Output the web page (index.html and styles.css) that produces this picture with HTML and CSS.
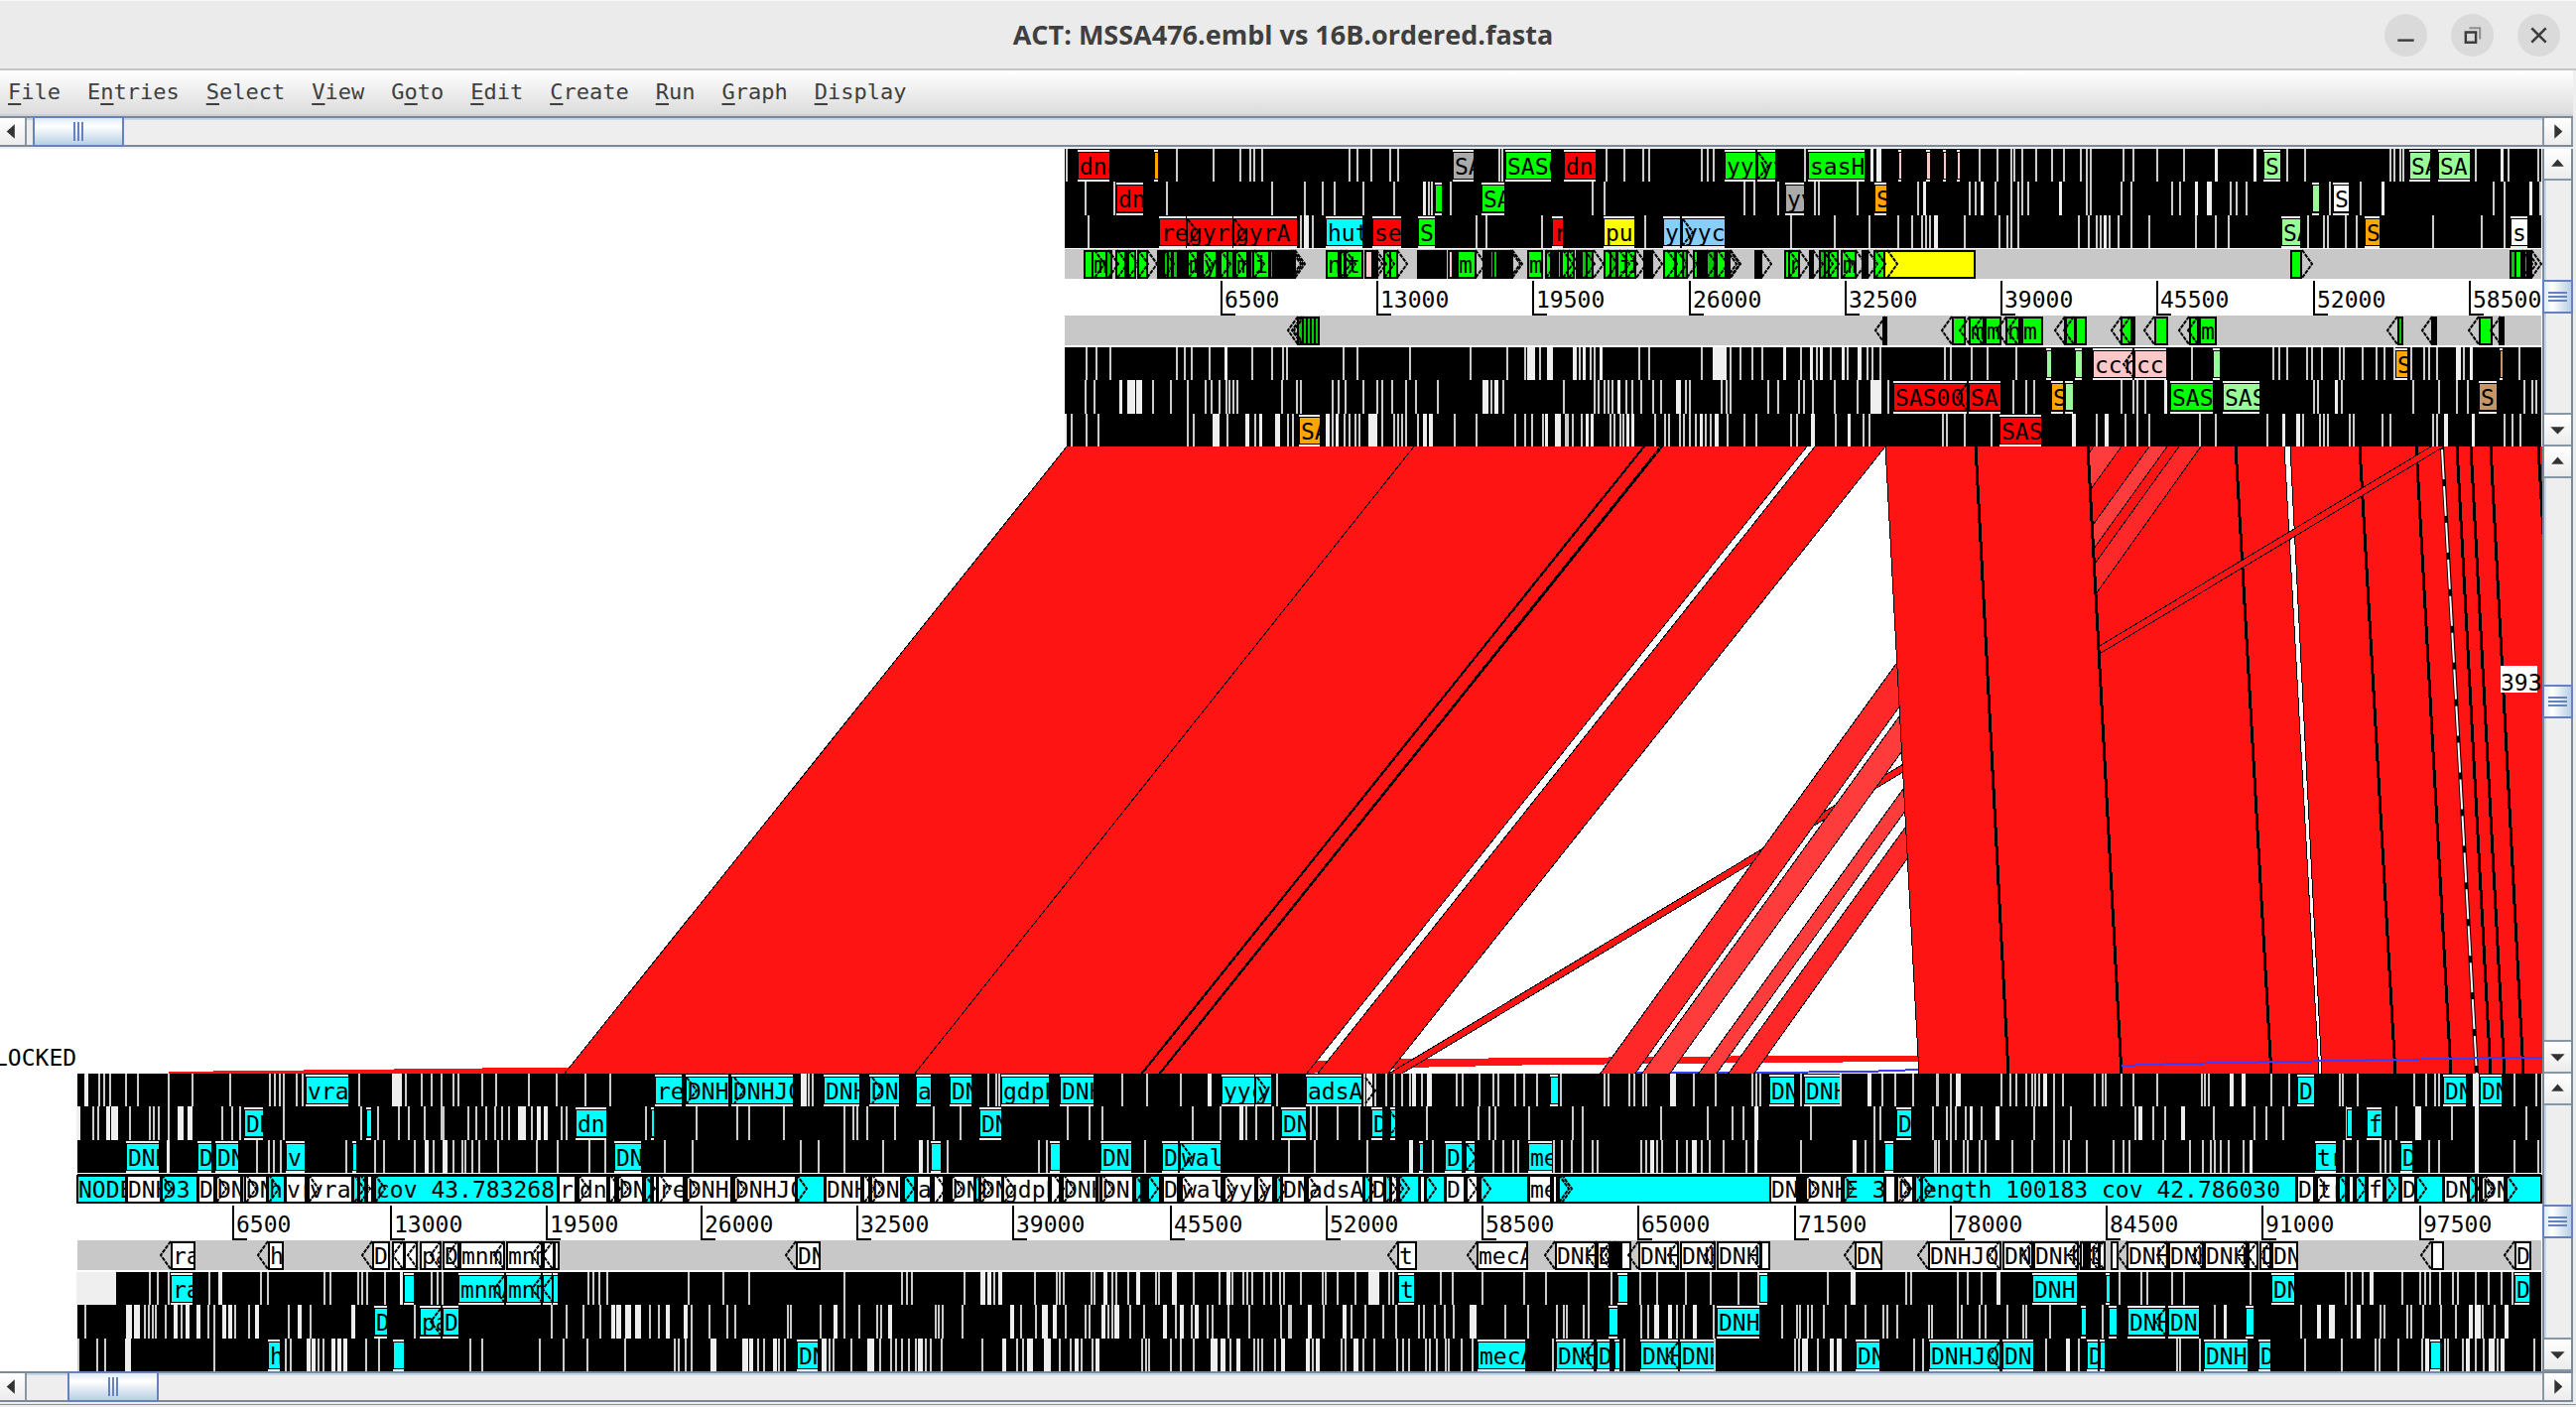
FILE: index.html
```html
<!DOCTYPE html>
<html lang="en">
<head>
<meta charset="utf-8">
<title>ACT: MSSA476.embl vs 16B.ordered.fasta</title>
<link rel="stylesheet" href="styles.css">
</head>
<body>
<div class="window">
  <header class="titlebar">
    <h1 class="title">ACT: MSSA476.embl vs 16B.ordered.fasta</h1>
    <div class="window-buttons">
      <button class="wbtn" aria-label="Minimize"><svg viewBox="0 0 42 42"><path d="M13 26h16" stroke="#3d3d3d" stroke-width="2.4"/></svg></button>
      <button class="wbtn" aria-label="Restore"><svg viewBox="0 0 42 42" fill="none"><path d="M14.500 18h10v10h-10z" stroke="#3d3d3d" stroke-width="2.400"/><path d="M18 14h10.500v11" stroke="#8f8f8f" stroke-width="2"/></svg></button>
      <button class="wbtn" aria-label="Close"><svg viewBox="0 0 42 42"><path d="M14 14l14 14M28 14l-14 14" stroke="#3d3d3d" stroke-width="2.600"/></svg></button>
    </div>
  </header>
  <nav class="menubar">
    <button><u>F</u>ile</button><button>E<u>n</u>tries</button><button><u>S</u>elect</button><button><u>V</u>iew</button><button>G<u>o</u>to</button><button><u>E</u>dit</button><button><u>C</u>reate</button><button><u>R</u>un</button><button><u>G</u>raph</button><button><u>D</u>isplay</button>
  </nav>

  <div class="hscroll hscroll-top">
    <button class="step" aria-label="Scroll left"><svg viewBox="0 0 26 30"><path d="M15 7v16l-9-8z"/></svg></button>
    <div class="track"><span class="thumb"><i></i><i></i><i></i></span></div>
    <button class="step step-end" aria-label="Scroll right"><svg viewBox="0 0 26 30"><path d="M10 7v16l9-8z"/></svg></button>
  </div>

  <main>
    <section class="pane">
      <svg class="canvas" id="subject" viewBox="0 0 2562 300" role="img" aria-label="MSSA476.embl"></svg>
      <div class="vscroll">
        <button class="step" aria-label="Scroll up"><svg viewBox="0 0 30 30"><path d="M8 18h14l-7-8z"/></svg></button>
        <div class="track"><span class="thumb"><i></i><i></i><i></i></span></div>
        <button class="step step-end" aria-label="Scroll down"><svg viewBox="0 0 30 30"><path d="M7 12h16l-8 8z"/></svg></button>
      </div>
    </section>
    <section class="pane pane-compare">
      <svg class="canvas" id="compare" viewBox="0 0 2562 632" role="img" aria-label="Comparison"></svg>
      <div class="vscroll">
        <button class="step" aria-label="Scroll up"><svg viewBox="0 0 30 30"><path d="M8 18h14l-7-8z"/></svg></button>
        <div class="track"><span class="thumb"><i></i><i></i><i></i></span></div>
        <button class="step step-end" aria-label="Scroll down"><svg viewBox="0 0 30 30"><path d="M7 12h16l-8 8z"/></svg></button>
      </div>
    </section>
    <section class="pane">
      <svg class="canvas" id="query" viewBox="0 0 2562 300" role="img" aria-label="16B.ordered.fasta"></svg>
      <div class="vscroll">
        <button class="step" aria-label="Scroll up"><svg viewBox="0 0 30 30"><path d="M8 18h14l-7-8z"/></svg></button>
        <div class="track"><span class="thumb"><i></i><i></i><i></i></span></div>
        <button class="step step-end" aria-label="Scroll down"><svg viewBox="0 0 30 30"><path d="M7 12h16l-8 8z"/></svg></button>
      </div>
    </section>
  </main>

  <div class="hscroll hscroll-bottom">
    <button class="step" aria-label="Scroll left"><svg viewBox="0 0 26 30"><path d="M15 7v16l-9-8z"/></svg></button>
    <div class="track"><span class="thumb"><i></i><i></i><i></i></span></div>
    <button class="step step-end" aria-label="Scroll right"><svg viewBox="0 0 26 30"><path d="M10 7v16l9-8z"/></svg></button>
  </div>
</div>
<script src="script.js"></script>
</body>
</html>
```
FILE: styles.css
```css
* { box-sizing: border-box; }

body {
  margin: 0;
  background: #eee;
  font-family: "DejaVu Sans Mono", monospace;
  color: #3f3f3f;
}

button {
  margin: 0;
  padding: 0;
  border: 0;
  background: none;
  font: inherit;
  color: inherit;
}

.window {
  padding-right: 3px;
  border-top: 1px solid #fafafa;
  border-bottom: 1px solid #8c8c94;
  padding-bottom: 2px;
}

/* Title bar */
.titlebar {
  display: grid;
  grid-template-columns: 1fr auto 1fr;
  align-items: center;
  height: 70px;
  margin-right: -3px;
  padding-right: 16px;
  padding-left: 6px;
  background: #ebebeb;
  border-bottom: 2px solid #c4c4c4;
}

.title {
  grid-column: 2;
  margin: 0;
  font: 700 27px/36px "Open Sans", "Noto Sans", sans-serif;
}

.window-buttons {
  display: flex;
  justify-content: flex-end;
  gap: 24px;
}

.wbtn {
  width: 43px;
  height: 43px;
  border-radius: 50%;
  background: #dadada;
}

.wbtn svg { display: block; width: 43px; height: 43px; fill: none; }

/* Menu bar */
.menubar {
  display: flex;
  gap: 27px;
  height: 46px;
  padding: 0 8px;
  background: linear-gradient(#fff, #dcdcdc);
  border-bottom: 2px solid #cfcfcf;
  font-size: 22px;
  line-height: 42px;
}

.menubar u {
  text-decoration-thickness: 2px;
  text-underline-offset: 4px;
}

/* Scroll bars */
.hscroll {
  display: flex;
  height: 31px;
  border-top: 2px solid #7a8a99;
  border-bottom: 2px solid #7a8a99;
  background: #eee;
}

.hscroll-top { margin-bottom: 2px; }

.step { display: block; flex: none; fill: #333; background: linear-gradient(#fff, #ececec); }
.step svg { display: block; }

.hscroll .step {
  width: 27px;
  border-right: 2px solid #8797a6;
}

.hscroll .step-end {
  width: 31px;
  border-left: 2px solid #8797a6;
}

.hscroll .step svg { width: 26px; height: 27px; }

.track {
  flex: 1;
  display: flex;
  min-width: 0;
  min-height: 0;
}

.hscroll .track { border-top: 2px solid #c4d7e8; }

.thumb {
  display: flex;
  align-items: center;
  justify-content: center;
  gap: 2px;
  border: 2px solid #6382bf;
  background: linear-gradient(#dfeaf5, #fff 30%, #b8cfe5);
}

.thumb i { background: #6382bf; }

.hscroll .thumb {
  width: 92px;
  margin: -4px 0 -2px 6px;
}

.hscroll-bottom .thumb { margin-left: 41px; }

.hscroll .thumb i { width: 2px; height: 19px; }

.vscroll {
  display: flex;
  flex-direction: column;
  flex: none;
  width: 31px;
  border-left: 2px solid #7a8a99;
  border-right: 2px solid #7a8a99;
  background: #eee;
}

.vscroll .step {
  height: 32px;
  border-bottom: 2px solid #8797a6;
}

.vscroll .step-end {
  height: 34px;
  border-top: 2px solid #8797a6;
}

.vscroll .step svg { width: 27px; height: 30px; }

.vscroll .track {
  flex-direction: column;
  justify-content: center;
  border-left: 2px solid #c4d7e8;
}

.vscroll .thumb {
  flex-direction: column;
  height: 34px;
  margin: 0 -2px 0 -4px;
  background: linear-gradient(90deg, #dfeaf5, #fff 30%, #b8cfe5);
}

.vscroll .thumb i { width: 19px; height: 2px; }

.pane-compare .track { justify-content: flex-start; padding-top: 208px; }

/* Sequence and comparison canvases */
.pane { display: flex; }

.canvas {
  display: block;
  flex: 1;
  min-width: 0;
  height: auto;
  background: #fff;
  font-size: 23px;
}

.canvas text { fill: #000; white-space: pre; }
.canvas rect, .bands { shape-rendering: crispEdges; }
.arrow { fill: none; stroke: #000; stroke-width: 2; stroke-dasharray: 4 1; }
.sliver { shape-rendering: auto; }
```
FILE: script.js
```js
// Stop codons are "centre" or "centre:width"; features are "start-end colour label".
// Every tile has its own origin and units per pixel.
const COLOURS = {
  r: '#ff0000', g: '#00ff00', o: '#ffa500', a: '#aaaaaa', c: '#00ffff',
  y: '#ffff00', s: '#87cefa', p: '#ffc8c8', l: '#98fb98', w: '#ffffff',
  t: '#c89664', k: '#000000', d: '#00c800', q: '#c8c8c8'
};
const ROWS = [[0, 33], [33, 34], [67, 33], [200, 33], [233, 34], [267, 33]];
const TOP = 3, LOW = 1568 / 660, LAST = 1568 / 646;
const ADVANCE = 23 * 0.602;

const subject = {
  left: 1073,
  right: 2561,
  strip: '#c8c8c8',
  ticks: [1231, 1388, 1545, 1703, 1860, 2017, 2174, 2332, 2489],
  tiles: [
    {
      x: 1060, s: TOP,
      stops: [
        '46 377 489 571 600 612 636 901 924 965 1024 1047 1352 1362',
        '101 190 347 665 766 818 854 942 1036 1126:9 1140 1150 1206',
        '112 754 770:16 789 1283 1313 1483',
        '106 136 178 377 401 424 477 527:9 606 665 700 712 883 924 1083 1265 1377 1430 1450:24 1477 1506:18',
        '101 130 209:10 240:24 265:18 306 360 412 466 484 506 527 536 548 560 695 742 754 848 866 889 942 983 1000 1030 1071 1101 1166 1312:18 1330 1344:12 1365 1548',
        '41:6 60 106 142 412 430 497:22 530 592:12 614 633:10 683:16 713 728 833:12 848 863:10 886 901 918 930 970:28 1000 1036 1048 1060 1072 1107 1127:12 1145:12 1218 1283 1400 1430 1453 1486 1497:10 1530:16 1554'
      ],
      genes: [
        '80-175 r dna;311-321 o;1214-1275 a SA;1373-1510 g SASO',
        '197-275 r dna;1161-1180 g;1301-1368 g SA',
        '327-404 r rec;411-545 r gyrB;553-740 r gyrA;830-940 c hut;972-1057 r ser;1110-1157 g SA;1516-1546 r r',
        '', '', '750-810 o SA'
      ],
      frameArrows: '2:411 2:553',
      fwd: '100-122 g;122-165 g m;165-180 d;195-222 g;222-232 k;232-252 g;262-287 g;320-338 k;338-350 d;350-362 d;366-380 d;386-402 k;402-412 k;412-440 g m;440-455 k;455-497 g y;497-510 k;510-530 g;532-548 d;548-555 k;555-592 g m;592-600 k;600-608 d;610-657 g i;660-670 d;670-735 k;830-868 g n;872-886 g;888-940 g t;948-970 p;970-985 k;1005-1022 g;1024-1044 g;1108-1192 k;1200-1212 p;1218-1226 k;1226-1282 g m;1304-1326 k;1326-1336 d;1336-1346 d;1346-1392 k;1440-1482 g m;1493-1510 g;1512-1530 k;1530-1545 d;1546-1570 k',
      fwdArrows: '130 170 197 232 262 287 340 385 415 455 510 555 612 735 728 722 872 888 970 980 1005 1044 1282 1392 1386 1495 1530',
      rev: '745-760 d;760-772 d;772-784 d;784-796 d;796-808 d',
      revArrows: '745 755 762'
    },
    {
      x: 1570, s: TOP,
      stops: [
        '147 200 259 276 435 452 470 747 950:8 970:16 1276 1329 1370 1381 1405 1447 1493 1529',
        '106 141 564 594 665 776 789 906 1088 1108:9 1246 1264 1284:10 1324 1370 1391 1405 1423 1520:10',
        '264 706 836 941 1029 1070 1100 1112 1124 1144:12 1229 1334 1358 1370 1393',
        '50:12 65 79:10 100 112 132:10 247 276 435 481:26 504:16 523 553 588 618 685:10 735 768:10 783 797:9 824 862:10 877 912:12 935 952 976 1170 1188 1252 1300 1387',
        '17 112 124 142 154 165 185:10 206 224 253 288 312 364:14 388 400 494 511 523 635 665 730 745 771 836 906 962:34 1000 1376 1417 1440',
        '4:8 29 45 71 90:10 103:10 158 171 190 197 212:10 226:10 294 323 335 370 382 400 418 432:9 446 462 479:12 512 564 600 706 724 771:12 841 879:9 924 941 1165 1176 1229 1312'
      ],
      genes: [
        '20-115 r dna;507-597 g yyc;605-657 g yy;760-927 g sasH;1032-1038 p;1115-1125 p;1167-1173 p;1208-1214 p',
        '690-744 a yy;960-992 o S',
        '141-232 y pur;320-368 s yy;378-503 s yyc',
        '1479-1491 l',
        '1018-1237 r SAS0033;1246-1338 r SA;1494-1527 o S;1537-1556 l',
        '1337-1461 r SAS'
      ],
      frameArrows: '0:605 2:378',
      fwd: '0-10 g;12-30 g;30-48 g;57-72 k;72-86 d;88-106 d;140-160 g;160-178 d;180-206 g i;206-235 g i;262-285 k;320-353 g;357-378 g;378-390 d;410-424 g;424-450 k;450-474 d;480-506 g;506-518 k;598-614 k;686-700 g;700-730 g n;762-772 k;792-806 d;806-820 d;820-846 g;858-900 g m;922-936 k;958-988 g;988-1260 y',
      fwdArrows: '16 32 82 108 150 185 210 238 285 330 360 390 450 484 510 518 522 614 700 730 770 800 820 860 900 935 960 997',
      rev: '984-994 k;1195-1230 g;1245-1287 g m;1292-1337 g m;1357-1395 g n;1395-1404 k;1405-1465 g m;1534-1565 g',
      revArrows: '990 1192 1245 1285 1355 1390 1532',
      revFrameArrows: '1:1237'
    },
    {
      x: 2080, s: TOP,
      stops: [
        '52 68 80 181 211 281 363 460:9 578:10 675 728 986 998 1016 1027 1245 1325:9 1345 1434',
        '68 80 175 205 328 351 401:10 439:16 504 522 551 804 898 966:10 1299 1333 1412:10 1440',
        '46 75 98 110 124:10 139 164 205 258 399 458 499 739 787 798 851 886 1116 1263 1333',
        '387 634 651 675 734 751 780 834 845 904 946 968 998 1051 1088 1104 1128 1192:14 1210 1231:10 1376',
        '175 210 223 246 307:10 757 769 824:10 839 1057 1133 1188 1222 1392 1416 1428',
        '31:12 98 130:12 187 222 258 411 458 616 666:10 707:12 722 775 786 798 864 875 963 986 1116 1128 1154:12 1237:10 1333 1357 1381'
      ],
      genes: [
        '605-655 l SA;1047-1108 l SA;1135-1226 l SA',
        '753-772 l;816-860 w S',
        '660-714 l SA;912-955 o S;1352-1401 w s',
        '37-54 l;90-208 p ccrB;216-308 p cc;454-472 l;1005-1038 o S;1319-1325 t',
        '7-25 l;325-450 g SAS;484-590 l SASO;1258-1308 t S',
        ''
      ],
      fwd: '686-718 g;1350-1364 d;1366-1382 g;1382-1392 k;1392-1402 d;1402-1412 k',
      fwdArrows: '720 1385 1398 1412',
      rev: '5-32 g;35-65 g;175-210 g;203-212 k;275-312 g;380-405 g;412-458 g mi;1010-1022 d;1114-1124 k;1257-1293 g;1318-1328 k',
      revArrows: '30 173 200 273 378 404 1008 1114 1255 1320',
      revFrameArrows: '0:210'
    }
  ]
};

const query = {
  left: 78,
  right: 2561,
  strip: '#000000',
  ticks: [235, 394, 551, 707, 864, 1021, 1180, 1337, 1494, 1651, 1809, 1966, 2123, 2280, 2439],
  tiles: [
    {
      x: 0, s: LOW,
      stops: [
        '206:9 237 250 264 302 331 405 462 550 647 658 670 680 711 724 860 950:24 972 1010 1033 1057 1086 1098 1155 1188 1267 1332 1401 1462',
        '188:9 224 236 259:10 274:16 312 358 369 381 403 433:14 456:12 531 556 576 680 865 904 954 980 1017 1057 1062 1122 1140 1165 1186 1203 1218 1250:18 1274 1290:9 1306:9 1345 1356 1546',
        '403:8 615 644 656 673 829 899 920 992 1022:10 1038 1066:12 1086 1108 1114 1130 1148 1192 1285 1336 1411 1450',
        '230:94 358 377 403 501 528:10 624 642 777 792 858 868 880 922 962:8 1034 1048 1060 1409 1420 1434 1454',
        '205 308:14 328:14 346 357 366 372 396 420:10 434 449:10 474:9 500 514 537:10 550:9 564 597 616:10 692 718:9 744 845:10 922 992 1322 1356 1398 1438 1468:9 1481:12 1503:14 1527:14 1556',
        '187 232 251 307:14 512 685 697 738:10 751:9 763 775 799:9 812:9 826:10 876 908 1127 1155 1293 1350 1406 1496'
      ],
      genes: [
        '733-835 c vraC',
        '588-630 c DN;878-888 c;1380-1452 c dna',
        '304-379 c DNHJ;476-506 c D;518-571 c DN;686-729 c vr;845-852 c;1474-1535 c DNH',
        '412-460 c ra;970-990 c;1101-1208 c mnmA;1213-1295 c mnm;1301-1322 c;1326-1334 c',
        '897-926 c D;1008-1056 c pa;1061-1097 c D',
        '645-669 c h;943-967 c'
      ],
      fwd: '186-302 c NODE;304-386 w DNH;388-473 c 93;475-512 w D;518-577 w DN;579-586 c;588-638 w DN;641-683 c h;685-732 w vr;738-843 w vra;845-858 c;861-875 c;878-892 w;898-1335 c cov 43.783268;1338-1378 w r;1386-1455 w dn;1458-1472 w;1480-1540 w DN;1545-1568 c',
      fwdArrows: '388 518 590 645 738 848 863 898 1386 1460 1480 1545',
      rev: '410-466 w ra;643-676 w h;893-932 w D;940-968 w;970-998 w;1007-1056 w pa;1062-1098 w D;1102-1208 w mnmA;1213-1298 w mnm;1302-1325 w;1327-1337 w',
      revArrows: '408 641 892 965 1001 1055 1095 1207 1297 1323',
      revFrameArrows: '0:1207 0:1297 0:1323 1:1055'
    },
    {
      x: 650, s: LOW,
      stops: [
        '379:14 392 402 822 842 849 1142 1203 1282 1353:10 1514',
        '2 124 221 249 333 477 500 509 533 598 691 756 1012 1064 1096 1311 1377 1428:9 1440 1464 1503',
        '48 114 374 416 477 570 661:10 676 724 942 962 1198 1543',
        '104 187 249 477 616 628 640 766 810:12 824:10 836 850:10 933 985 993 1003 1068 1077 1102:9 1120 1129 1157 1182:10 1223 1231 1267:12 1314 1375 1396:9 1407 1432 1441 1454 1482 1498 1520 1529',
        '11 34 54:10 98:9 112 155 198 216 342 350 420 456:10 477 514 557 565 586:10 695 704 713 760 879:10 901 937 957:14 982:9 1008 1054 1064 1098:9 1110 1119 1130:12 1161 1195 1244:9 1271 1284:9 1310 1321:10 1347 1359 1398 1446 1523 1543',
        '71 80 98 112 164:14 239:14 254:9 270 286 310:9 320 334 429:12 443 452 495 540:16 562 588 601 616 631 648 659:12 673 685 710 808 860:10 892 904 922:14 963:16 993 1020 1033:9 1045 1071 1084:9 1190 1199 1208 1260 1282 1314 1363:16 1385:12 1402 1420:9 1458 1468 1478 1508 1527:10'
      ],
      genes: [
        '27-87 c rec;99-200 c DNHJ;210-354 c DNHJO;431-512 c DNH;540-608 c DN;650-684 c a;731-782 c DN;856-968 c gdpP;995-1075 c DNH;1382-1458 c yyc;1463-1500 c y',
        '16-22 c;804-852 c DN;1526-1583 c DN',
        '687-708 c;972-992 c;1094-1163 c DN;1239-1275 c D;1284-1378 c walK',
        '', '', '367-414 c DN'
      ],
      fwd: '0-14 c;18-28 w;32-92 w rec;99-207 w DNHJ;213-361 w DNHJO;364-429 c;432-518 w DNH;522-536 w;541-614 w DN;620-646 c;650-685 w a;692-715 w;733-788 w DN;790-800 c;804-855 w DN;858-968 w gdpP;972-992 w;1000-1082 w DNH;1084-1090 c;1094-1168 w DN;1174-1187 c;1205-1234 c;1239-1276 w D;1286-1380 w wal;1387-1460 w yyc;1466-1505 w y;1510-1522 c;1526-1580 w DN',
      fwdArrows: '0 36 99 213 364 524 543 620 695 735 790 806 860 978 1003 1096 1174 1205 1286 1387 1466 1510',
      frameArrows: '0:99 0:213 0:543 0:1466 2:1286',
      rev: '364-417 w DN',
      revArrows: '362'
    },
    {
      x: 1300, s: LOW,
      stops: [
        '177 190:14 204 231 250 269 287 297:9 315 334:12 400 413 453 487 498 540 560 592 648 754 763 813 825 845 852 916:14 967 1020 1108 1117 1127 1223 1319 1388:9 1418 1450 1493 1552',
        '50 65 115 167 329 451 478 491 572 678 702 888 1000 1060 1085 1117:9 1247 1400 1413 1540',
        '59 186 290:9 343 488 511 535 547 632 650 675 700 724 736 841 852 866:9 879 891 926 951 967:12 985 1005 1038 1092 1117:8 1223 1352:10 1377 1400 1544 1554',
        '26 79 85 115 157 201:26 238 246 362 390 461 561 613 716 770 838 879 948 1008 1074 1122 1288 1349:12 1475 1487',
        '2 47:9 80 130:9 148 180 223 254 310 321 347 371 391 438:16 515 571 640 656 664 704 714 841 858 878:12 909:10 926 943 970:9 1014 1178 1215 1222 1241 1249 1278 1330 1377 1421 1430 1455 1530 1537',
        '43:10 54 66:9 123 132 157:12 175 203 256 272 284 326 336 351 374 381 412 436 629 800 1017 1210 1218 1234:14 1265 1298:10 1316:12 1494 1516'
      ],
      genes: [
        '41-170 c adsA;624-641 c;1151-1208 c DN;1234-1315 c DNH',
        '196-220 c D;243-253 c;1454-1487 c D',
        '312-319 c;373-411 c D;422-443 c;573-627 c me;1426-1445 c',
        '261-296 c t;787-807 c;1127-1142 c',
        '765-784 c;1025-1124 c DNH',
        '452-564 c mecA;638-728 c DNH;736-766 c D;780-789 c;840-928 c DNH;935-1014 c DNH;1356-1412 c DN;1533-1699 c DNHJO'
      ],
      fwd: '35-41 c;42-175 w adsA;178-192 c;195-225 w D;228-240 c;243-256 w;262-310 c;312-322 w;326-370 c;373-418 w D;422-450 w;455-570 c;573-625 w me;630-640 w;645-1149 c;1151-1213 w DN;1236-1322 w DNH;1325-1424 c E 3;1426-1450 w;1454-1492 w D;1496-1512 c;1515-1522 w',
      fwdArrows: '42 180 230 246 262 326 422 455 645 652 1236 1326 1456 1464 1500',
      frameArrows: '2:422 1:238 0:180',
      rev: '260-302 w t;450-567 w mecA;637-732 w DNH;737-765 w D;770-778 k;780-790 k;793-815 w;837-930 w DNH;936-1018 w DNH;1023-1125 w DNH;1128-1148 w;1353-1415 w DN;1530-1702 w DNHJO',
      revArrows: '258 448 635 733 768 780 835 930 1018 1125 1351 1528',
      revFrameArrows: '2:728 2:928'
    },
    {
      x: 1950, s: LAST,
      stops: [
        '5 38 57:12 162 185 200 224 238 246 254 268:9 291 314 391 409 418 457 486 543 653 661 671 726:9 754:10 823 866 990 998 1033 1172 1202 1224 1232 1323:14 1418 1470',
        '30 40 52 76 88:8 114 154:10 243 291 333 490 502:9 533 563 606:10 681 781 810 852 1008 1128 1181:14 1265 1325:9 1446',
        '2 10 38 71 79 110 124 190 239 291 315 328 371 438 461 475 558 624 656 675 684 700 719 756 774:8 999 1033 1090 1101 1113 1208 1232 1325:9 1418 1476',
        '57 81 115 154:9 452 504 520 581 610 771 1004 1020 1047 1068:9 1143 1186 1198 1212 1236 1268 1280 1323 1355 1385 1413',
        '57 66 110 124 178 216 224 281 410 685 711:8 895 939:10 970:14 1020 1036:9 1089 1099 1156 1165 1194 1238 1275 1312:10 1327:14 1341 1368 1398:9',
        '271 326:9 352 592 600 648 905 995 1077 1087 1133 1192 1205:10 1247 1256 1292 1303:9 1324 1343 1361:14 1377 1389:9 1466'
      ],
      genes: [
        '888-926 c D;1245-1298 c DN;1334-1387 c DN',
        '1010-1020 c;1059-1093 c f',
        '932-980 c tr;1140-1168 c D',
        '241-346 c DNH;421-427 c;826-879 c DN;1420-1454 c D',
        '360-369 c;426-445 c;474-564 c DNH;573-645 c DNH;763-778 c',
        '168-241 c DN;374-398 c D;406-416 c;659-765 c DNH;793-821 c D;1214-1235 c'
      ],
      fwd: '-31-884 c ength 100183 cov 42.786030;887-927 w D;935-983 w tr;988-1006 c;1011-1025 w;1030-1054 c;1058-1097 w f;1102-1136 c;1140-1174 w D;1178-1242 c;1245-1303 w DN;1306-1322 c;1325-1332 w;1337-1393 w DN;1397-1483 c',
      fwdArrows: '-31 935 988 1030 1102 1178 1306 1338 1345 1397',
      rev: '168-238 w DN;243-350 w DNH;358-364 w;368-374 w;378-400 w D;403-415 w;432-447 w;449-469 q;472-568 w DNH;573-655 w DNH;659-763 w DNH;768-788 w;795-820 w D;825-885 w DN;1215-1242 w;1420-1456 w D',
      revArrows: '158 238 350 362 398 412 470 568 655 763 790 820 1213 1418',
      revFrameArrows: '2:158 1:564'
    }
  ]
};

const rect = (x, y, w, h, fill, extra = '') =>
  `<rect x="${Math.round(x)}" y="${y}" width="${Math.max(1, Math.round(w))}" height="${h}" fill="${fill}"${extra}/>`;

const list = (text) => (text ? text.split(';') : []);
const words = (text) => (text ? text.split(' ') : []);

function parseFeature(item, tile) {
  const [, a, b, colour, label] = item.match(/^(-?\d+)-(\d+) (\w) ?(.*)$/);
  const x = Math.round(tile.x + a / tile.s);
  return { x, w: Math.round(tile.x + b / tile.s) - x, colour: COLOURS[colour], label };
}

// A label is clipped to its feature; letters that fall wholly outside are dropped.
function labelled(f, y, h, baseline) {
  const label = f.label.slice(0, Math.ceil((f.w - 3) / ADVANCE));
  if (!label) return '';
  return `<svg x="${f.x}" y="${y}" width="${f.w}" height="${h}"><text x="1" y="${baseline}">${label}</text></svg>`;
}

function arrow(x, y, dir, h) {
  const tip = x + 10 * dir;
  return `<path class="arrow" d="M${x} ${y}L${tip} ${y + h / 2}L${x} ${y + h}"/>`;
}

function drawGenome(id, g) {
  const width = g.right - g.left;
  let out = rect(g.left, 0, width, 100, '#000') + rect(g.left, 200, width, 100, '#000');
  out += rect(g.left, 101, width, 30, g.strip) + rect(g.left, 168, width, 30, '#c8c8c8');

  for (const tile of g.tiles) {
    tile.stops.forEach((row, i) => {
      const [y, h] = ROWS[i];
      for (const stop of row.split(' ')) {
        const [centre, w] = stop.split(':').map(Number);
        const px = w ? w / tile.s : 2;
        out += rect(tile.x + centre / tile.s - px / 2, y, px, h, w ? '#efefef' : '#cccccc');
      }
    });
  }

  for (const tile of g.tiles) {
    tile.genes.forEach((row, i) => {
      const [y, h] = ROWS[i];
      for (const item of list(row)) {
        const f = parseFeature(item, tile);
        out += rect(f.x - 1, y, f.w + 1, h, '#000');
        out += rect(f.x - 1, y + 1, f.w + 1, 2, '#eee') + rect(f.x - 1, y + h - 2, f.w + 1, 2, '#eee');
        out += rect(f.x, y + 4, f.w, 26, f.colour) + labelled(f, y + 4, 26, 22);
      }
    });
    for (const [items, y] of [[tile.fwd, 102], [tile.rev, 169]]) {
      for (const item of list(items)) {
        const f = parseFeature(item, tile);
        const line = f.colour === COLOURS.q ? '' : ' stroke="#000" stroke-width="2"';
        out += rect(f.x, y + 1, f.w, 27, f.colour, line) + labelled(f, y, 29, 23);
      }
    }
    const at = (v) => Math.round(tile.x + v / tile.s);
    for (const v of words(tile.fwdArrows)) out += arrow(at(v), 102, 1, 28);
    for (const v of words(tile.revArrows)) out += arrow(at(v), 169, -1, 28);
    for (const [key, dir, base] of [['frameArrows', 1, 0], ['revFrameArrows', -1, 3]]) {
      for (const v of words(tile[key])) {
        const [row, x] = v.split(':').map(Number);
        out += arrow(at(x), ROWS[row + base][0] + 4, dir, 26);
      }
    }
  }

  g.ticks.forEach((x, i) => {
    out += rect(x - 1, 133, 2, 35, '#000') + rect(x - 1, 166, 15, 2, '#000');
    out += `<text x="${x + 3}" y="160">${(i + 1) * 6500}</text>`;
  });
  document.getElementById(id).innerHTML = out;
}

// Matches run from the top x pair to the bottom x pair of the comparison.
function drawCompare() {
  const H = 633;
  const line = (a, b, w = 1, colour = '#000') =>
    `<path d="M${a} 0L${b} ${H}" stroke="${colour}" stroke-width="${w}"/>`;
  const band = (t1, t2, b1, b2, fill = '#ff1414') =>
    `<path d="M${t1} 0H${t2}L${b2} ${H}H${b1}z" fill="${fill}"/>` + line(t1, b1) + line(t2, b2);

  let out = '<g class="bands" fill="none">';
  out += '<path fill="#ff1414" d="M170 630L352 628L532 626L1307 619L1440 617L1806 614H1934V620H1918L1557 623L1417 626L1300 633H170z"/>';
  out += '<path stroke="#3c3cff" stroke-width="2" d="M1640 631H1767L1880 630L1934 628"/>';
  out += band(1075, 1425, 568, 921) + band(1425, 1656, 921, 1149) + band(1656, 1673, 1149, 1167);
  out += band(1673, 1821, 1167, 1316) + band(1829, 1900, 1327, 1398);
  out += line(1657, 1150, 2) + line(1675, 1168, 2);
  out += band(2104, 2302, 2138, 2337) + band(2308, 2640, 2340, 2680);
  out += '<g class="sliver">' + line(2461, 2496, 4);
  out += '<path d="M2461 3L2496 633" stroke="#fff" stroke-width="2" stroke-dasharray="30 7"/></g>';
  for (const [a, b] of [[2253, 2289], [2378, 2414], [2435, 2470], [2476, 2510], [2490, 2524], [2510, 2543], [2558, 2594]]) {
    out += line(a, b, 3);
  }
  out += band(2450, 2463, 1398, 1411);
  out += band(2069, 2103, 1612, 1647, '#ff2828') + band(2110, 2138, 1654, 1682, '#ff3c3c');
  out += band(2166, 2184, 1711, 1729, '#ff3c3c') + band(2196, 2218, 1741, 1767, '#ff2828');
  out += band(1900, 1991, 1934, 2024) + band(1991, 2104, 2024, 2138);
  out += line(1991, 2024, 3) + line(2104, 2138, 3);
  out += '<path stroke="#3c3cff" stroke-width="2" d="M2138 624L2196 622L2304 620L2412 618L2520 616H2562"/>';
  out += '</g>';
  out += '<text x="-6" y="624">LOCKED</text>';
  out += rect(2520, 221, 37, 27, '#fff') + '<text x="2520" y="246">393</text>';
  document.getElementById('compare').innerHTML = out;
}

drawGenome('subject', subject);
drawCompare();
drawGenome('query', query);
```
